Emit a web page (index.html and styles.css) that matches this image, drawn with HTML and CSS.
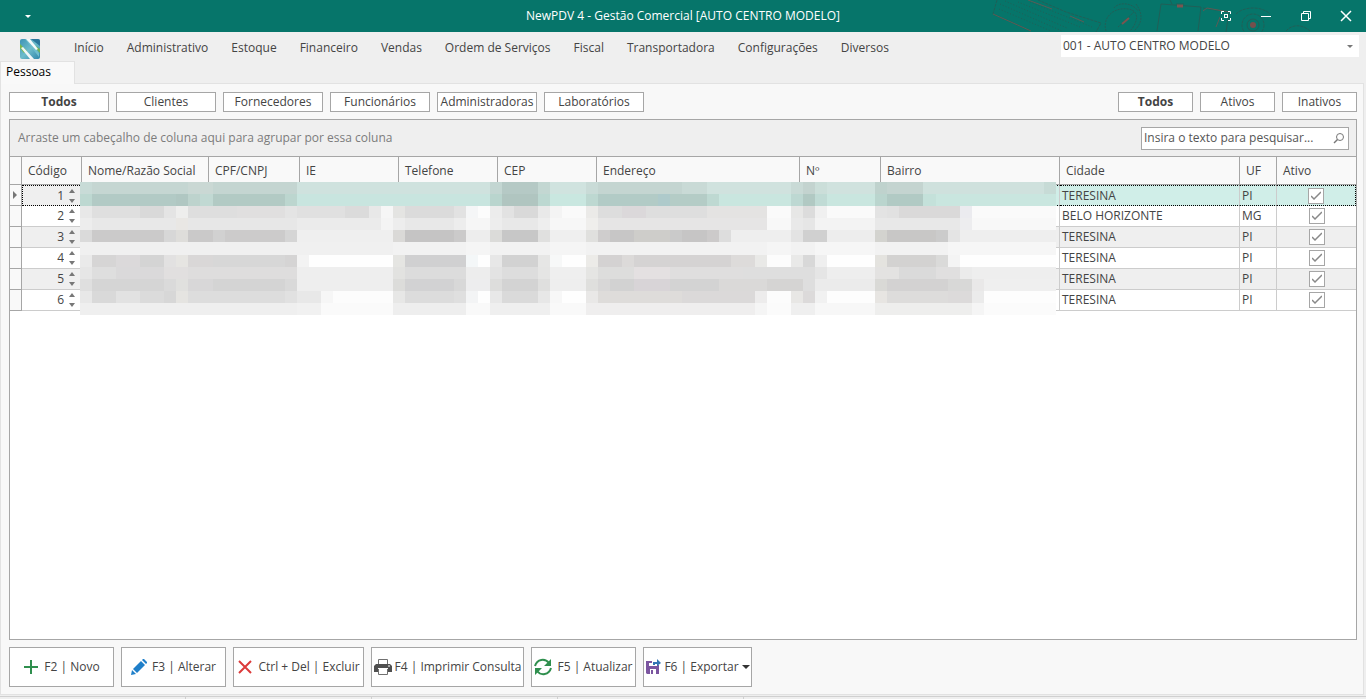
FILE: index.html
```html
<!DOCTYPE html>
<html lang="pt-BR">
<head>
  <meta charset="UTF-8">
  <meta name="viewport" content="width=device-width, initial-scale=1.0">
  <title>NewPDV 4 - Gestão Comercial</title>
  <link rel="stylesheet" href="styles.css">
</head>
<body>
  <header class="titlebar">
    <div class="titlebar-left">
      <button class="quick" aria-label="Acesso rápido"><svg width="6" height="3" viewBox="0 0 6 3"><path d="M0 0h6L3 3z" fill="#fff"/></svg></button>
    </div>
    <h1>NewPDV 4 - Gestão Comercial [AUTO CENTRO MODELO]</h1>
    <div class="titlebar-right">
      <svg class="art" width="340" height="32" viewBox="0 0 340 32" fill="none" stroke="#215f57" stroke-width="1">
        <path d="M7 0 3 14l38 17M48 0l28 12 35 11-5 9" stroke-dasharray="3 1"/>
        <path d="M10 4l62 27M15 1l62 27M9 9l52 22M28 2l62 25M40 2l62 25" stroke-dasharray="1 2"/>
        <path d="M3 14l38 17M38 0l24 9M80 16l14 6" stroke="#5c5b55"/>
        <path d="M116 31c-4-14 8-24 22-22s8 16 2 22M124 8c4-6 18-6 24 3M128 27l16-15M146 4c6 8 8 18-2 27" stroke-dasharray="2 1"/>
        <path d="M132 24l7-6" stroke="#7b5550" stroke-width="2"/>
        <path d="M167 31l4-27 40 3-3 24M186 4h8M213 8l26 4-3 20M180 0l2 4"/>
        <path d="M187 6h6" stroke="#7b5550" stroke-width="3"/>
        <path d="M213 11l4-3 22 4M226 27l4-10" stroke="#5c5b55"/>
        <circle cx="263" cy="25" r="11" stroke-dasharray="3 1"/>
        <circle cx="263" cy="25" r="6"/>
        <circle cx="263" cy="25" r="3" fill="#75504d" stroke="none"/>
        <path d="M246 14c8-8 26-8 34 0M296 31c6-7 16-7 24 0" stroke-dasharray="3 1"/>
      </svg>
      <button aria-label="Tela cheia"><svg width="12" height="12" viewBox="0 0 12 12" fill="none" stroke="#fff"><path d="M1.500 4V1.500H4M8 1.500h2.500V4M10.500 8v2.500H8M4 10.500H1.500V8"/><rect x="4.500" y="4.500" width="3" height="3"/></svg></button>
      <button aria-label="Minimizar"><svg width="12" height="12" viewBox="0 0 12 12" stroke="#fff"><path d="M1 6.500h10"/></svg></button>
      <button aria-label="Restaurar"><svg width="12" height="12" viewBox="0 0 12 12" fill="none" stroke="#fff"><path d="M1.500 3.500h7v7h-7zM3.500 3V1.500h7v7H9"/></svg></button>
      <button aria-label="Fechar"><svg width="14" height="14" viewBox="0 0 14 14" stroke="#fff" stroke-width="1.500"><path d="M2 2l10 10M12 2 2 12"/></svg></button>
    </div>
  </header>

  <div class="menubar">
    <svg class="logo" width="20" height="20" viewBox="0 0 20 20">
      <defs>
        <linearGradient id="blue" x1="0" y1="0" x2="1" y2="1"><stop offset="0" stop-color="#3d93b5"/><stop offset=".5" stop-color="#6dbccb"/><stop offset="1" stop-color="#2f86aa"/></linearGradient>
        <clipPath id="round"><rect width="20" height="20" rx="2"/></clipPath>
      </defs>
      <g clip-path="url(#round)">
        <rect width="20" height="20" fill="url(#blue)"/>
        <path d="M0 5l7 7-3 2-4-5z" fill="#7cb94a"/>
        <path d="M14 6l6 4v4l-6-6z" fill="#72b356"/>
        <path d="M11 0h9v7z" fill="#2a779c"/>
        <path d="M5 0h4l10 14v4z" fill="#6fbdcd"/>
        <path d="M6 0h4l8 10-2 1z" fill="#f4fafa"/>
        <path d="M1 9l2-1 11 12h-4z" fill="#f0f7f7"/>
      </g>
    </svg>
    <nav class="menu">
      <a href="#">Início</a>
      <a href="#">Administrativo</a>
      <a href="#">Estoque</a>
      <a href="#">Financeiro</a>
      <a href="#">Vendas</a>
      <a href="#">Ordem de Serviços</a>
      <a href="#">Fiscal</a>
      <a href="#">Transportadora</a>
      <a href="#">Configurações</a>
      <a href="#">Diversos</a>
    </nav>
    <div class="company">
      <select aria-label="Empresa">
        <option>001 - AUTO CENTRO MODELO</option>
      </select>
      <svg width="6" height="3" viewBox="0 0 6 3"><path d="M0 0h6L3 3z" fill="#777"/></svg>
    </div>
  </div>

  <div class="tabs"><a class="tab" href="#">Pessoas</a></div>

  <main class="page">
    <div class="filters">
      <button class="filter active">Todos</button>
      <button class="filter">Clientes</button>
      <button class="filter">Fornecedores</button>
      <button class="filter">Funcionários</button>
      <button class="filter">Administradoras</button>
      <button class="filter">Laboratórios</button>
      <div class="status-filters">
        <button class="filter active">Todos</button>
        <button class="filter">Ativos</button>
        <button class="filter">Inativos</button>
      </div>
    </div>

    <div class="grid-panel">
      <div class="group-bar">
        <span>Arraste um cabeçalho de coluna aqui para agrupar por essa coluna</span>
        <label class="search">
          <input type="text" placeholder="Insira o texto para pesquisar..." aria-label="Pesquisar">
          <svg width="12" height="12" viewBox="0 0 12 12" fill="none" stroke="#777"><circle cx="7" cy="5" r="3.500"/><path d="M4.500 7.500 1 11" stroke-width="1.500"/></svg>
        </label>
      </div>

      <div class="table-container">
        <table>
          <colgroup>
            <col class="c-mark"><col class="c-code"><col class="c-name"><col class="c-doc"><col class="c-mid"><col class="c-mid"><col class="c-mid"><col><col class="c-num"><col class="c-district"><col class="c-city"><col class="c-uf"><col class="c-active">
          </colgroup>
          <thead>
            <tr>
              <th></th>
              <th>Código</th>
              <th>Nome/Razão Social</th>
              <th>CPF/CNPJ</th>
              <th>IE</th>
              <th>Telefone</th>
              <th>CEP</th>
              <th>Endereço</th>
              <th>Nº</th>
              <th>Bairro</th>
              <th>Cidade</th>
              <th>UF</th>
              <th>Ativo</th>
            </tr>
          </thead>
          <tbody id="rows"></tbody>
        </table>
        <svg class="mask" id="mask" viewBox="0 0 81 133" preserveAspectRatio="none" shape-rendering="crispEdges" aria-hidden="true"></svg>
      </div>
    </div>

    <div class="actions">
      <button class="w-small"><svg width="16" height="16" viewBox="0 0 16 16"><path d="M7 1h2v6h6v2H9v6H7V9H1V7h6z" fill="#2f8f4e"/></svg>F2 | Novo</button>
      <button class="w-small"><svg width="16" height="16" viewBox="0 0 16 16" fill="#1f7fc9"><path d="M1 11l4 4-5 1zM2 10l8-8 4 4-8 8zM11 1l1-1h1l3 3v1l-1 1z"/></svg>F3 | Alterar</button>
      <button class="w-medium"><svg width="16" height="16" viewBox="0 0 16 16" stroke="#dc3a3a" stroke-width="2"><path d="M2 2l12 12M14 2 2 14"/></svg>Ctrl + Del | Excluir</button>
      <button class="w-large"><svg width="18" height="18" viewBox="0 0 18 18"><path d="M2 6h14l2 2v6h-4v-3H4v3H0V8z" fill="#505050"/><path d="M4.500 6V1.500h9V6M4.500 11v5.500h9V11" fill="#fff" stroke="#707070"/><path d="M4 10.500h10" stroke="#fff"/><path d="M14 8h2" stroke="#fff"/></svg>F4 | Imprimir Consulta</button>
      <button class="w-small"><svg width="18" height="18" viewBox="0 0 18 18" fill="none" stroke="#2f8f4e" stroke-width="2"><path d="M1 8C3 1 11 0 15 5M17 10C15 17 7 18 3 13"/><path d="M17 1v7h-7zM1 17v-7h7z" fill="#2f8f4e" stroke="none"/></svg>F5 | Atualizar</button>
      <button class="w-export"><svg width="16" height="16" viewBox="0 0 16 16"><path d="M1 2h6v2H4v3h8V6h2v9H2l-1-1z" fill="#7b55a0"/><path d="M5 10h6v5H5z" fill="#fff"/><path d="M6 11h2v4H6z" fill="#7b55a0"/><path d="M4 4h4v3H4z" fill="#fff"/><path d="M8 6V3h4V0l4 4-4 3V5h-2v1z" fill="#3475b5"/></svg>F6 | Exportar<svg width="8" height="4" viewBox="0 0 8 4"><path d="M0 0h8L4 4z" fill="#333"/></svg></button>
    </div>
  </main>
  <footer class="statusbar"><span></span><span></span><span></span><span></span></footer>
  <script src="script.js"></script>
</body>
</html>
```

FILE: styles.css
```css
* {
  box-sizing: border-box;
}
body {
  font-family: "Open Sans", "Noto Sans", sans-serif;
  font-size: 12px;
  line-height: 16px;
  background: #efefef;
  color: #444;
  margin: 0;
  height: 100vh;
  display: flex;
  flex-direction: column;
  overflow: hidden;
}
button, input, select {
  font: inherit;
  color: inherit;
}
button {
  padding: 0;
  border: 1px solid #a6a6a6;
  border-radius: 0;
  background: #fff;
}
a {
  color: inherit;
  text-decoration: none;
}

/* Barra de título */
.titlebar {
  display: grid;
  grid-template-columns: 1fr auto 1fr;
  align-items: center;
  height: 32px;
  flex: none;
  background: #06756a;
  color: #fff;
}
.titlebar h1 {
  margin: 0;
  font-size: 12px;
  font-weight: normal;
}
.titlebar button {
  background: none;
  border: 0;
  width: 40px;
  height: 32px;
  display: flex;
  align-items: center;
  justify-content: center;
}
.titlebar .quick {
  margin-left: 8px;
}
.titlebar-right {
  position: relative;
  display: flex;
  justify-content: flex-end;
}
.titlebar-right button {
  position: relative;
}
.art {
  position: absolute;
  right: 36px;
  top: 0;
}

/* Menu */
.menubar {
  display: flex;
  align-items: flex-start;
  height: 29px;
  flex: none;
  padding: 0 7px 0 20px;
}
.logo {
  margin-top: 7px;
  flex: none;
}
.menu {
  display: flex;
  gap: 23px;
  padding: 8px 0 0 34px;
  white-space: nowrap;
}
.company {
  position: relative;
  width: 298px;
  margin: 3px 0 0 auto;
}
.company select {
  display: block;
  width: 100%;
  height: 22px;
  padding: 0 2px;
  border: 0;
  border-radius: 0;
  background: #fff;
  appearance: none;
}
.company svg {
  position: absolute;
  right: 6px;
  top: 10px;
}
.tabs {
  flex: none;
  height: 22px;
}
.tab {
  display: block;
  width: 75px;
  height: 23px;
  padding: 2px 5px;
  position: relative;
  background: #f9f9f9;
  border: 1px solid #e2e2e2;
  border-bottom: 0;
  color: #000;
}

/* Conteúdo */
.page {
  flex: 1;
  display: flex;
  flex-direction: column;
  gap: 7px;
  margin-right: 2px;
  padding: 8px 6px 7px 8px;
  background: #f8f8f8;
  border: 1px solid #e2e2e2;
}
.filters, .status-filters, .actions {
  display: flex;
  gap: 7px;
}
.filter {
  width: 100px;
  height: 20px;
  line-height: 16px;
}
.status-filters {
  margin-left: auto;
}
.status-filters .filter {
  width: 75px;
}
.active {
  font-weight: bold;
}
.grid-panel {
  flex: 1;
  border: 1px solid #a6a6a6;
  background: #fff;
}
.group-bar {
  display: flex;
  align-items: center;
  justify-content: space-between;
  height: 37px;
  padding: 0 7px 0 8px;
  background: #efefef;
  border-bottom: 1px solid #a6a6a6;
  color: #7c7c7c;
}
.search {
  display: flex;
  align-items: center;
  width: 208px;
  height: 23px;
  padding: 0 3px 0 2px;
  background: #fff;
  border: 1px solid #a6a6a6;
}
.search input {
  flex: 1;
  min-width: 0;
  padding: 0;
  border: 0;
  outline: 0;
}
.search input::placeholder {
  color: #555;
}

/* Tabela */
.table-container {
  position: relative;
}
table {
  width: 100%;
  table-layout: fixed;
  border-collapse: separate;
  border-spacing: 0;
}
.c-mark { width: 12px; }
.c-code { width: 60px; }
.c-name { width: 127px; }
.c-doc { width: 91px; }
.c-mid { width: 99px; }
.c-num { width: 81px; }
.c-district { width: 179px; }
.c-city { width: 180px; }
.c-uf { width: 37px; }
.c-active { width: 79px; }
th {
  height: 28px;
  padding: 0 6px;
  background: #f9f9f9;
  border-right: 1px solid #a6a6a6;
  border-bottom: 1px solid #a6a6a6;
  font-weight: normal;
  text-align: left;
  white-space: nowrap;
}
td {
  height: 21px;
  padding: 0 2px;
  border-right: 1px solid #ccc;
  border-bottom: 1px solid #ccc;
}
th:last-child, td:last-child {
  border-right: 0;
}
tbody tr:nth-child(odd) {
  background: #efefef;
}
tbody .selected:first-child {
  background: #d0eee8;
}
.selected td {
  border-top: 1px dotted #000;
  border-bottom: 1px dotted #000;
}
.selected .code {
  background: #efefef;
  border-left: 1px dotted #000;
}
.selected td:last-child {
  border-right: 1px dotted #000;
}
tbody .mark {
  padding: 0 0 0 3px;
  background: #f9f9f9;
  border-top: 0;
  border-right: 1px solid #a6a6a6;
  border-bottom: 1px solid #a6a6a6;
}
.mark svg {
  display: block;
}
.spin {
  display: flex;
  align-items: center;
  gap: 5px;
  padding-right: 4px;
}
.spin input {
  flex: 1;
  min-width: 0;
  width: 0;
  height: 16px;
  padding: 0;
  border: 0;
  background: none;
  text-align: right;
}
.check input {
  display: block;
  appearance: none;
  width: 16px;
  height: 16px;
  margin: 0 auto;
  border: 1px solid #a6a6a6;
  background: #fff;
}
.check label {
  display: block;
  position: relative;
}
.check svg {
  position: absolute;
  left: 50%;
  top: 3px;
  margin-left: -5px;
}
.mask {
  position: absolute;
  left: 70px;
  top: 25px;
  width: calc(100% - 370px);
  height: 133px;
}

/* Botões de ação */
.actions button {
  display: flex;
  align-items: center;
  justify-content: center;
  gap: 5px;
  height: 40px;
  white-space: nowrap;
}
.actions svg {
  flex: none;
}
.actions .w-small { width: 105px; }
.actions .w-medium { width: 131px; }
.actions .w-large { width: 153px; gap: 3px; }
.actions .w-export { width: 109px; gap: 3px; }
.statusbar {
  flex: none;
  display: flex;
  height: 3px;
  margin-top: 1px;
  border-top: 1px solid #d0d0d0;
}
.statusbar span {
  width: 186px;
  border-right: 1px solid #d0d0d0;
}
```

FILE: script.js
```javascript
const people = [
  { code: 1, city: "TERESINA", uf: "PI" },
  { code: 2, city: "BELO HORIZONTE", uf: "MG" },
  { code: 3, city: "TERESINA", uf: "PI" },
  { code: 4, city: "TERESINA", uf: "PI" },
  { code: 5, city: "TERESINA", uf: "PI" },
  { code: 6, city: "TERESINA", uf: "PI" }
];

const marker = '<svg width="5" height="8" viewBox="0 0 5 8"><path d="M0 0v8l4-4z" fill="#777"/></svg>';
const arrows = '<svg width="6" height="14" viewBox="0 0 6 14" fill="#777"><path d="M0 4h6L3 0zM0 10h6l-3 4z"/></svg>';
const tick = '<svg width="10" height="10" viewBox="0 0 10 10" fill="none" stroke="#888" stroke-width="1.5"><path d="M0 5l3 3 7-7"/></svg>';

document.getElementById("rows").innerHTML = people.map((person, index) => `<tr class="${index === 0 ? "selected" : ""}">
  <td class="mark">${index === 0 ? marker : ""}</td>
  <td class="code"><div class="spin"><input type="text" value="${person.code}" aria-label="Código">${arrows}</div></td>
  <td></td><td></td><td></td><td></td><td></td><td></td><td></td><td></td>
  <td>${person.city}</td>
  <td>${person.uf}</td>
  <td class="check"><label><input type="checkbox" checked aria-label="Ativo">${tick}</label></td>
</tr>`).join("");

// Mosaico sobre os dados pessoais: [coluna inicial, cor], até a próxima entrada
const mosaic = [
  [[0, "#c8dbd7"], [1, "#c5d6d2"], [9, "#cad8d4"], [11, "#c4d5d1"], [18, "#cfe2de"], [34, "#c3d6d2"], [35, "#b5c9c5"], [38, "#c3d7d2"], [39, "#d0e3df"], [42, "#c9dbd7"], [43, "#c4d5d1"], [50, "#c9dad6"], [52, "#d0e2de"], [59, "#c9dad6"], [60, "#c3d3cf"], [61, "#cbded9"], [62, "#d0e2de"], [66, "#bfd2cd"], [67, "#c4d4d0"], [70, "#cfe1dd"], [80, "#c7dbd6"]],
  [[0, "#bdd8d1"], [1, "#b2cac5"], [8, "#b0c7c2"], [9, "#bdd3cd"], [10, "#c1d9d3"], [11, "#b2cac4"], [17, "#bcd6cf"], [18, "#c8e5df"], [34, "#b9d5ce"], [35, "#b0c5c0"], [38, "#bcd8d1"], [39, "#c9e7e0"], [42, "#bdd8d1"], [43, "#b2cbc6"], [48, "#aecacb"], [49, "#b4ccc6"], [52, "#bed9d2"], [53, "#c9e6df"], [59, "#bdd8d2"], [60, "#b1c9c3"], [61, "#c0dbd5"], [62, "#c9e6df"], [66, "#bad5ce"], [67, "#b1cac4"], [70, "#c4e1da"], [71, "#c9e6df"]],
  [[0, "#e8e8e8"], [1, "#dfdfdf"], [5, "#d9d9d9"], [7, "#e4e4e4"], [8, "#eeeeed"], [9, "#dedede"], [13, "#e0dfdf"], [17, "#e4e4e4"], [18, "#e0e0e0"], [22, "#dbdbdb"], [24, "#e8e8e8"], [25, "#f6f6f6"], [26, "#e4e4e2"], [27, "#dbdbdb"], [31, "#e2e2e2"], [32, "#f5f6f7"], [33, "#fcfcfc"], [34, "#ececec"], [35, "#e2e2e2"], [36, "#d9d9d9"], [38, "#e9e9e9"], [39, "#f4f4f4"], [40, "#fafafa"], [42, "#ebeae8"], [43, "#dddddd"], [45, "#dbd8da"], [47, "#dedede"], [52, "#e4e3e2"], [57, "#fafafa"], [59, "#e7e7e6"], [60, "#dcdcdc"], [61, "#f0f0f0"], [62, "#fafafa"], [66, "#e3e3e3"], [67, "#e1e1e1"], [68, "#dad9d9"], [73, "#ebebef"], [74, "#fafafa"]],
  [[0, "#ededed"], [1, "#e8e8e8"], [8, "#e9e7e4"], [9, "#e7e7e7"], [18, "#ebebeb"], [25, "#f4f4f4"], [26, "#ededed"], [27, "#e8e8e8"], [31, "#ededed"], [32, "#f6f6f6"], [34, "#ededed"], [35, "#e8e8e8"], [38, "#eeeeee"], [39, "#f7f7f7"], [42, "#efeeec"], [43, "#e6e5e5"], [57, "#f8f8f8"], [59, "#e9e9e9"], [60, "#e6e6e6"], [61, "#f3f3f3"], [66, "#e8e8e8"], [73, "#ededef"], [74, "#f8f8f8"]],
  [[0, "#dadada"], [1, "#cbcaca"], [7, "#d7d7d7"], [8, "#deddda"], [9, "#cac9c9"], [11, "#d1d1d1"], [12, "#cccbcb"], [17, "#d5d5d5"], [18, "#efefef"], [26, "#dad9d7"], [27, "#c5c4c4"], [31, "#cbcaca"], [32, "#ededed"], [34, "#dbdbd9"], [35, "#c7c7c7"], [38, "#e0e0df"], [39, "#efefef"], [42, "#e0e0de"], [43, "#cfcdcd"], [44, "#c7c6c6"], [46, "#cecdca"], [49, "#cacaca"], [50, "#c6c5c5"], [52, "#cccaca"], [53, "#dddddd"], [54, "#eeeeee"], [59, "#e3e3e3"], [60, "#d0d0d0"], [62, "#ededed"], [66, "#d3d3cf"], [67, "#c8c7c6"], [71, "#cbcbcb"], [72, "#e4e4e4"], [73, "#eeeeee"]],
  [[0, "#f0f0f0"], [26, "#f2f2f2"], [32, "#f5f5f5"], [34, "#f2f2f2"], [39, "#f5f5f5"], [42, "#f2f2f2"], [57, "#f5f5f5"], [59, "#f2f2f2"], [61, "#f6f6f6"], [66, "#f2f2f2"], [72, "#f6f6f6"]],
  [[0, "#eaeaea"], [1, "#d6d5d5"], [3, "#dbd9da"], [5, "#d4d4d4"], [7, "#e2e1e1"], [8, "#e6e5e2"], [9, "#d9d7d7"], [11, "#d7d7d7"], [17, "#d5d4d4"], [18, "#f3f3f3"], [19, "#fefefe"], [26, "#e5e5e2"], [27, "#d0d0d1"], [32, "#f4f7f8"], [33, "#fefefe"], [34, "#e7e7e7"], [35, "#d2d2d2"], [38, "#e6e6e5"], [39, "#f7f8f8"], [40, "#fefefe"], [42, "#ecebe8"], [43, "#d4d2d2"], [45, "#dcdad9"], [46, "#d5d3d3"], [54, "#dddbda"], [56, "#e9e9e7"], [57, "#fcfcfc"], [59, "#e9e9e8"], [60, "#d8d8d8"], [61, "#efefef"], [62, "#fefefe"], [66, "#e4e3df"], [67, "#d3d2d1"], [71, "#dadad9"], [72, "#f4f4f4"], [73, "#fefefe"]],
  [[0, "#e6e6e6"], [1, "#dedede"], [3, "#dad9da"], [7, "#e1dfdf"], [9, "#dedddd"], [18, "#eeeeee"], [26, "#e2e2e0"], [27, "#dcdcdc"], [32, "#ededed"], [34, "#e3e3e3"], [35, "#dddddd"], [38, "#e5e5e4"], [39, "#efefef"], [42, "#e5e5e3"], [43, "#dddddc"], [46, "#e4e0e1"], [49, "#dfdede"], [55, "#dedede"], [61, "#e5e5e5"], [62, "#eeeeee"], [66, "#e3e2e1"], [68, "#dadada"], [71, "#e0dfdf"], [73, "#ebebeb"], [74, "#eeeeee"]],
  [[0, "#dfdfdf"], [1, "#d5d5d5"], [7, "#dadada"], [8, "#e0e0de"], [9, "#d8d7d8"], [11, "#d4d4d4"], [17, "#d9d9d9"], [18, "#eeeeee"], [26, "#dcdcda"], [27, "#d2d2d3"], [31, "#d8d8d8"], [32, "#ededee"], [34, "#dddddc"], [35, "#d3d3d3"], [38, "#dfdfde"], [39, "#eeeeee"], [42, "#dfdfdd"], [43, "#d8d7d7"], [44, "#d2d2d2"], [46, "#d8d4d7"], [49, "#d3d3d3"], [53, "#dad9d8"], [57, "#d5d4d3"], [60, "#dedede"], [61, "#ebebeb"], [66, "#d9d9d6"], [67, "#d3d2d2"], [72, "#d8d8d7"], [74, "#e9e8e8"], [75, "#efefef"]],
  [[0, "#e8e8e8"], [1, "#d9d9d9"], [3, "#e2e2e2"], [5, "#dbdbdb"], [7, "#d7d7d7"], [8, "#e5e4e1"], [9, "#dddddd"], [17, "#e1e1e1"], [18, "#e8e8e8"], [20, "#f6f6f6"], [21, "#fcfcfc"], [26, "#e7e7e6"], [27, "#dcdcdc"], [31, "#dfdfdf"], [32, "#f3f4f5"], [33, "#fefefe"], [34, "#e8e8e8"], [35, "#dadada"], [38, "#e7e7e7"], [39, "#f7f7f7"], [40, "#fefefe"], [42, "#e9e8e7"], [43, "#dedcda"], [50, "#dbd9d9"], [56, "#edecec"], [57, "#fcfcfc"], [59, "#e8e7e5"], [60, "#dcdada"], [61, "#f1f1f1"], [62, "#fdfdfd"], [66, "#e7e5e2"], [67, "#dddcdb"], [72, "#dcdada"], [74, "#ebebeb"], [75, "#fdfdfd"]],
  [[0, "#efefef"], [18, "#f1f1f1"], [20, "#fafafa"], [26, "#eeeeee"], [32, "#f9f9f9"], [34, "#efefef"], [39, "#f9f9f9"], [42, "#efeeee"], [56, "#f5f5f5"], [57, "#fbfbfb"], [59, "#efefef"], [61, "#f7f7f7"], [66, "#eeeeed"], [74, "#f5f5f5"], [75, "#fbfbfb"]]
];

let offset = 0;
let blocks = "";
mosaic.forEach((row, index) => {
  const height = index === 5 ? 13 : 12;
  row.forEach(([start, color], i) => {
    const end = i + 1 < row.length ? row[i + 1][0] : 81;
    blocks += `<rect x="${start}" y="${offset}" width="${end - start}" height="${height}" fill="${color}"/>`;
  });
  offset += height;
});
document.getElementById("mask").innerHTML = blocks;
```
